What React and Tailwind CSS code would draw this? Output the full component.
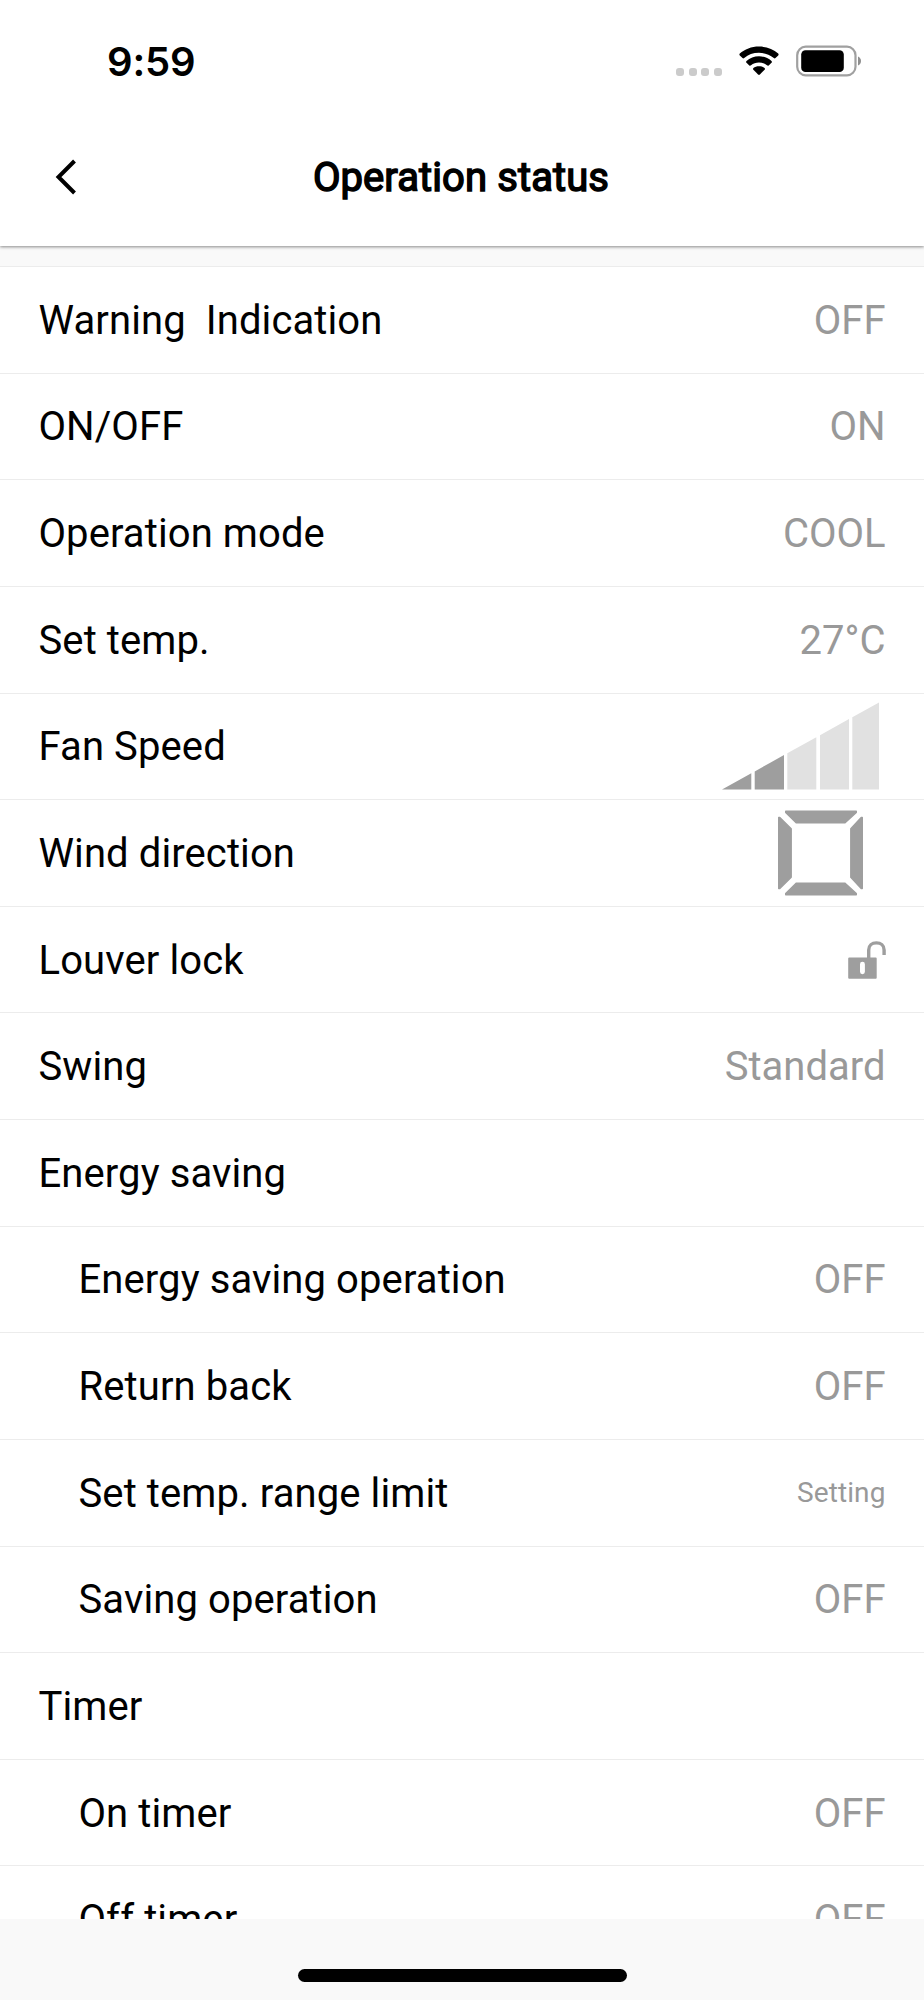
import React from "react";
import clsx from "clsx";

function FanSpeedIcon() {
  return (
    <svg className="mr-[7px] h-[88px] w-[157px]" viewBox="0 0 157 88">
      <path fill="#9e9e9e" d="M0 87.5 29.3 71.3V87.5ZM32.7 69.4 62 53.1V87.5H32.7Z" />
      <path fill="#e1e1e1" d="M65.3 51.3 94.3 35.2V87.5H65.3ZM98 33.2 127 17.1V87.5H98ZM130.3 15.3 157 .5V87.5H130.3Z" />
    </svg>
  );
}

function WindDirectionIcon() {
  return (
    <svg className="mr-[23px] h-[86px] w-[85px]" viewBox="0 0 85 86" fill="#9e9e9e" stroke="#9e9e9e" strokeWidth="1.4" strokeLinejoin="round">
      <path d="M7.7 1.2H78.3V2.5L66.8 12.9H18.4L7.7 2.5Z" />
      <path d="M7.7 84.8H78.3V83.5L66.8 73.1H18.4L7.7 83.5Z" />
      <path d="M.7 7.5H1.8L13.2 18.8V67.2L1.8 78.5H.7Z" />
      <path d="M84.3 7.5H83.2L72.8 18.8V67.2L83.2 78.5H84.3Z" />
    </svg>
  );
}

function UnlockIcon() {
  return (
    <svg className="h-[38px] w-[38px]" viewBox="0 0 38 38">
      <path fill="#9e9e9e" fillRule="evenodd" d="M1.2 16.5H27.8Q28.7 16.5 28.7 17.4V36.8Q28.7 37.7 27.8 37.7H1.2Q.2 37.7 .2 36.8V17.4Q.2 16.5 1.2 16.5ZM14.4 20.8Q12 20.8 12 23.2V30.8Q12 33.2 14.4 33.2Q16.9 33.2 16.9 30.8V23.2Q16.9 20.8 14.4 20.8Z" />
      <path fill="none" stroke="#9e9e9e" strokeWidth="3.4" d="M20.7 17V9C20.7 4.5 24 1.9 28.4 1.9S36.1 4.7 36.1 9V14" />
    </svg>
  );
}

const rows = [
  { label: "Warning  Indication", value: "OFF" },
  { label: "ON/OFF", value: "ON" },
  { label: "Operation mode", value: "COOL" },
  { label: "Set temp.", value: "27°C" },
  { label: "Fan Speed", icon: <FanSpeedIcon /> },
  { label: "Wind direction", icon: <WindDirectionIcon /> },
  { label: "Louver lock", icon: <UnlockIcon /> },
  { label: "Swing", value: "Standard" },
  { label: "Energy saving" },
  { label: "Energy saving operation", value: "OFF", nested: true },
  { label: "Return back", value: "OFF", nested: true },
  { label: "Set temp. range limit", value: "Setting", nested: true, small: true },
  { label: "Saving operation", value: "OFF", nested: true },
  { label: "Timer" },
  { label: "On timer", value: "OFF", nested: true },
  { label: "Off timer", value: "OFF", nested: true },
];

function StatusRow({ label, value, icon, nested, small }) {
  return (
    <div
      className={clsx(
        "flex h-[106.64px] shrink-0 items-center justify-between border-b-[1.5px] border-[#ececec] pr-[38.5px]",
        nested ? "pl-[78.5px]" : "pl-[38.5px]"
      )}
    >
      <span className="whitespace-pre pt-[2px] text-[40px] leading-none tracking-[0.1px] text-black">{label}</span>
      {icon}
      {value && (
        <span className={clsx("leading-none text-[#999]", small ? "pt-px text-[28px] tracking-[0.1px]" : "pt-[2px] text-[40px]")}>
          {value}
        </span>
      )}
    </div>
  );
}

function StatusBar() {
  return (
    <div className="flex h-[122px] items-center justify-between pl-[107px] pr-[62px]">
      <span className="pt-[2px] font-['Inter',sans-serif] text-[40px] font-semibold leading-none tracking-[-0.2px]">9:59</span>
      <div className="flex items-center">
        <div className="mt-[21px] flex gap-[4.7px]">
          {[0, 1, 2, 3].map((i) => (
            <span key={i} className="size-2 rounded-[3px] bg-[#cbcbcb]" />
          ))}
        </div>
        <svg className="ml-[17px] h-[30px] w-[40px]" viewBox="0 0 40 30">
          <path d="M20 .5C12.5 .5 5.6 3.2.8 7.6Q0 8.5.8 9.4L3.5 12Q4.3 12.8 5.2 12C9.2 8.6 14.2 6.7 20 6.7S30.8 8.6 34.8 12Q35.7 12.8 36.5 12L39.2 9.4Q40 8.5 39.2 7.6C34.4 3.2 27.5.5 20 .5Z" />
          <path d="M20 10.3C15.2 10.3 10.8 12 7.5 15Q6.7 15.9 7.5 16.7L10.3 19.4Q11.1 20 12 19.3C14.2 17.5 16.9 16.5 20 16.5S25.8 17.5 28 19.3Q28.9 20 29.7 19.4L32.5 16.7Q33.3 15.9 32.5 15C29.2 12 24.8 10.3 20 10.3Z" />
          <path d="M20 20.2C17.7 20.2 15.9 20.8 14.4 22.1Q13.7 22.9 14.4 23.7L19.1 28.5Q20 29.3 20.9 28.5L25.6 23.7Q26.3 22.9 25.6 22.1C24.1 20.8 22.3 20.2 20 20.2Z" />
        </svg>
        <svg className="ml-[17px] h-[32px] w-[66px]" viewBox="0 0 66 32">
          <rect x="1.2" y="1.7" width="58.3" height="28.6" rx="8.5" fill="none" stroke="#a0a0a0" strokeWidth="2.2" />
          <rect x="5.2" y="5.2" width="42.6" height="21.8" rx="4.3" />
          <path d="M62 11.5Q65 13 65 16T62 20.5Z" fill="#8f8f8f" />
        </svg>
      </div>
    </div>
  );
}

export default function App() {
  return (
    <div className="flex h-[2000px] w-[924px] flex-col overflow-hidden bg-[#f9f9f9] font-['Roboto',sans-serif] text-black">
      <header className="z-10 h-[246px] shrink-0 bg-white shadow-[0_1px_3px_rgba(0,0,0,0.45)]">
        <StatusBar />
        <div className="grid h-[110px] grid-cols-[120px_1fr_120px] items-center">
          <button className="pl-[54px] text-left" aria-label="Back">
            <svg className="h-[36px] w-[22px]" viewBox="0 0 22 36" fill="none" stroke="#000" strokeWidth="4">
              <path d="M20.5 2 4.5 18 20.5 34" />
            </svg>
          </button>
          <h1 className="pr-[2px] pt-[2px] text-center text-[40px] leading-none tracking-[0.1px] [-webkit-text-stroke:1.5px_#000]">Operation status</h1>
        </div>
      </header>
      <main className="mt-[20px] flex h-[1653px] shrink-0 flex-col overflow-hidden border-t-[1.5px] border-[#ececec] bg-white">
        {rows.map((row) => (
          <StatusRow key={row.label} {...row} />
        ))}
      </main>
      <footer className="flex flex-1 justify-center pt-[49.5px]">
        <div className="h-[13px] w-[329px] rounded-full bg-black" />
      </footer>
    </div>
  );
}
